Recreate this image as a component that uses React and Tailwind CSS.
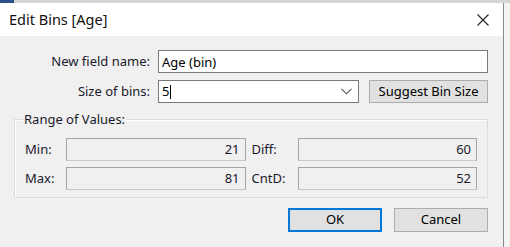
import React, { useState } from 'react';

const font = { fontFamily: '"Noto Sans", "Open Sans", sans-serif' };

const ReadOnlyField = ({ value }) => (
  <div className="h-[23px] flex-1 border border-[#a5a5a5] border-b-[#c8c8c8] bg-[#f0f0f0] px-[5px] text-right leading-[21px] text-[#1a1a2e]">
    {value}
  </div>
);

const App = () => {
  const [name, setName] = useState('Age (bin)');
  const [size, setSize] = useState('5');

  return (
    <div className="flex h-[247px] w-[510px] flex-col overflow-hidden bg-[#f4f4f4] text-[13px]" style={font}>
      {/* app strip behind the dialog */}
      <div className="flex h-[3px] shrink-0 bg-[#d6d6d6]">
        <div className="w-[14px] bg-[#2b4f86]" />
      </div>

      <div className="flex flex-1">
        {/* Dialog */}
        <div className="flex w-[504px] flex-col border-r border-[#8a8a8a]">
          {/* Title bar */}
          <div className="flex h-[33px] shrink-0 items-center justify-between bg-white pl-[9px] pr-[14px]">
            <span className="text-[14.5px] text-[#111]">Edit Bins [Age]</span>
            <svg width="12" height="12" viewBox="0 0 12 12" className="text-[#222]">
              <path d="M0.5 0.5L11.5 11.5M11.5 0.5L0.5 11.5" stroke="currentColor" strokeWidth="1.1" fill="none" />
            </svg>
          </div>

          {/* Body */}
          <div className="flex flex-1 flex-col bg-[#f0f0f0] pl-[14px] pr-[15px] text-[#1a1a2e]">
            {/* New field name */}
            <div className="mt-[14px] flex items-center">
              <label className="w-[144px] pr-[8px] text-right">New field name:</label>
              <input
                value={name}
                onChange={(e) => setName(e.target.value)}
                className="h-[23px] flex-1 border border-[#7a7a7a] bg-white px-[3px] text-[13px] text-black outline-none"
                style={font}
              />
            </div>

            {/* Size of bins */}
            <div className="mt-[7px] flex items-center">
              <label className="w-[144px] pr-[8px] text-right">Size of bins:</label>
              <div className="flex h-[23px] w-[201px] items-center border border-[#7a7a7a] bg-white pl-[3px] pr-[6px]">
                <span className="text-black">5</span>
                <span className="ml-[1px] h-[14px] w-px bg-black" />
                <input
                  value={size === '5' ? '' : size}
                  onChange={(e) => setSize(e.target.value)}
                  className="w-0 flex-1 bg-transparent text-[13px] text-black outline-none"
                  style={font}
                />
                <svg width="11" height="7" viewBox="0 0 11 7" className="text-[#555]">
                  <path d="M0.5 0.8L5.5 5.8L10.5 0.8" stroke="currentColor" strokeWidth="1.1" fill="none" />
                </svg>
              </div>
              <button className="ml-[10px] h-[23px] flex-1 border border-[#adadad] bg-[#e1e1e1] text-[13px] text-black">
                Suggest Bin Size
              </button>
            </div>

            {/* Range of Values group */}
            <div className="relative mt-[16px] h-[79px] border border-[#dcdcdc] shadow-[inset_1px_1px_0_#fff]">
              <span className="absolute left-[8px] top-[-10px] bg-[#f0f0f0] px-[1px]">Range of Values:</span>
              <div className="mt-[18px] flex flex-col gap-[6px] pl-[10px] pr-[10px]">
                <div className="flex items-center">
                  <span className="w-[41px]">Min:</span>
                  <ReadOnlyField value="21" />
                  <span className="w-[52px] pl-[6px]">Diff:</span>
                  <ReadOnlyField value="60" />
                </div>
                <div className="flex items-center">
                  <span className="w-[41px]">Max:</span>
                  <ReadOnlyField value="81" />
                  <span className="w-[52px] pl-[6px]">CntD:</span>
                  <ReadOnlyField value="52" />
                </div>
              </div>
            </div>

            {/* Buttons */}
            <div className="mt-[10px] flex justify-end gap-[12px]">
              <button className="h-[24px] w-[94px] border-2 border-[#0078d7] bg-[#e1e1e1] text-[13px] text-black">OK</button>
              <button className="h-[24px] w-[94px] border border-[#adadad] bg-[#e1e1e1] text-[13px] text-black">Cancel</button>
            </div>
          </div>
        </div>
      </div>
    </div>
  );
};

export default App;
